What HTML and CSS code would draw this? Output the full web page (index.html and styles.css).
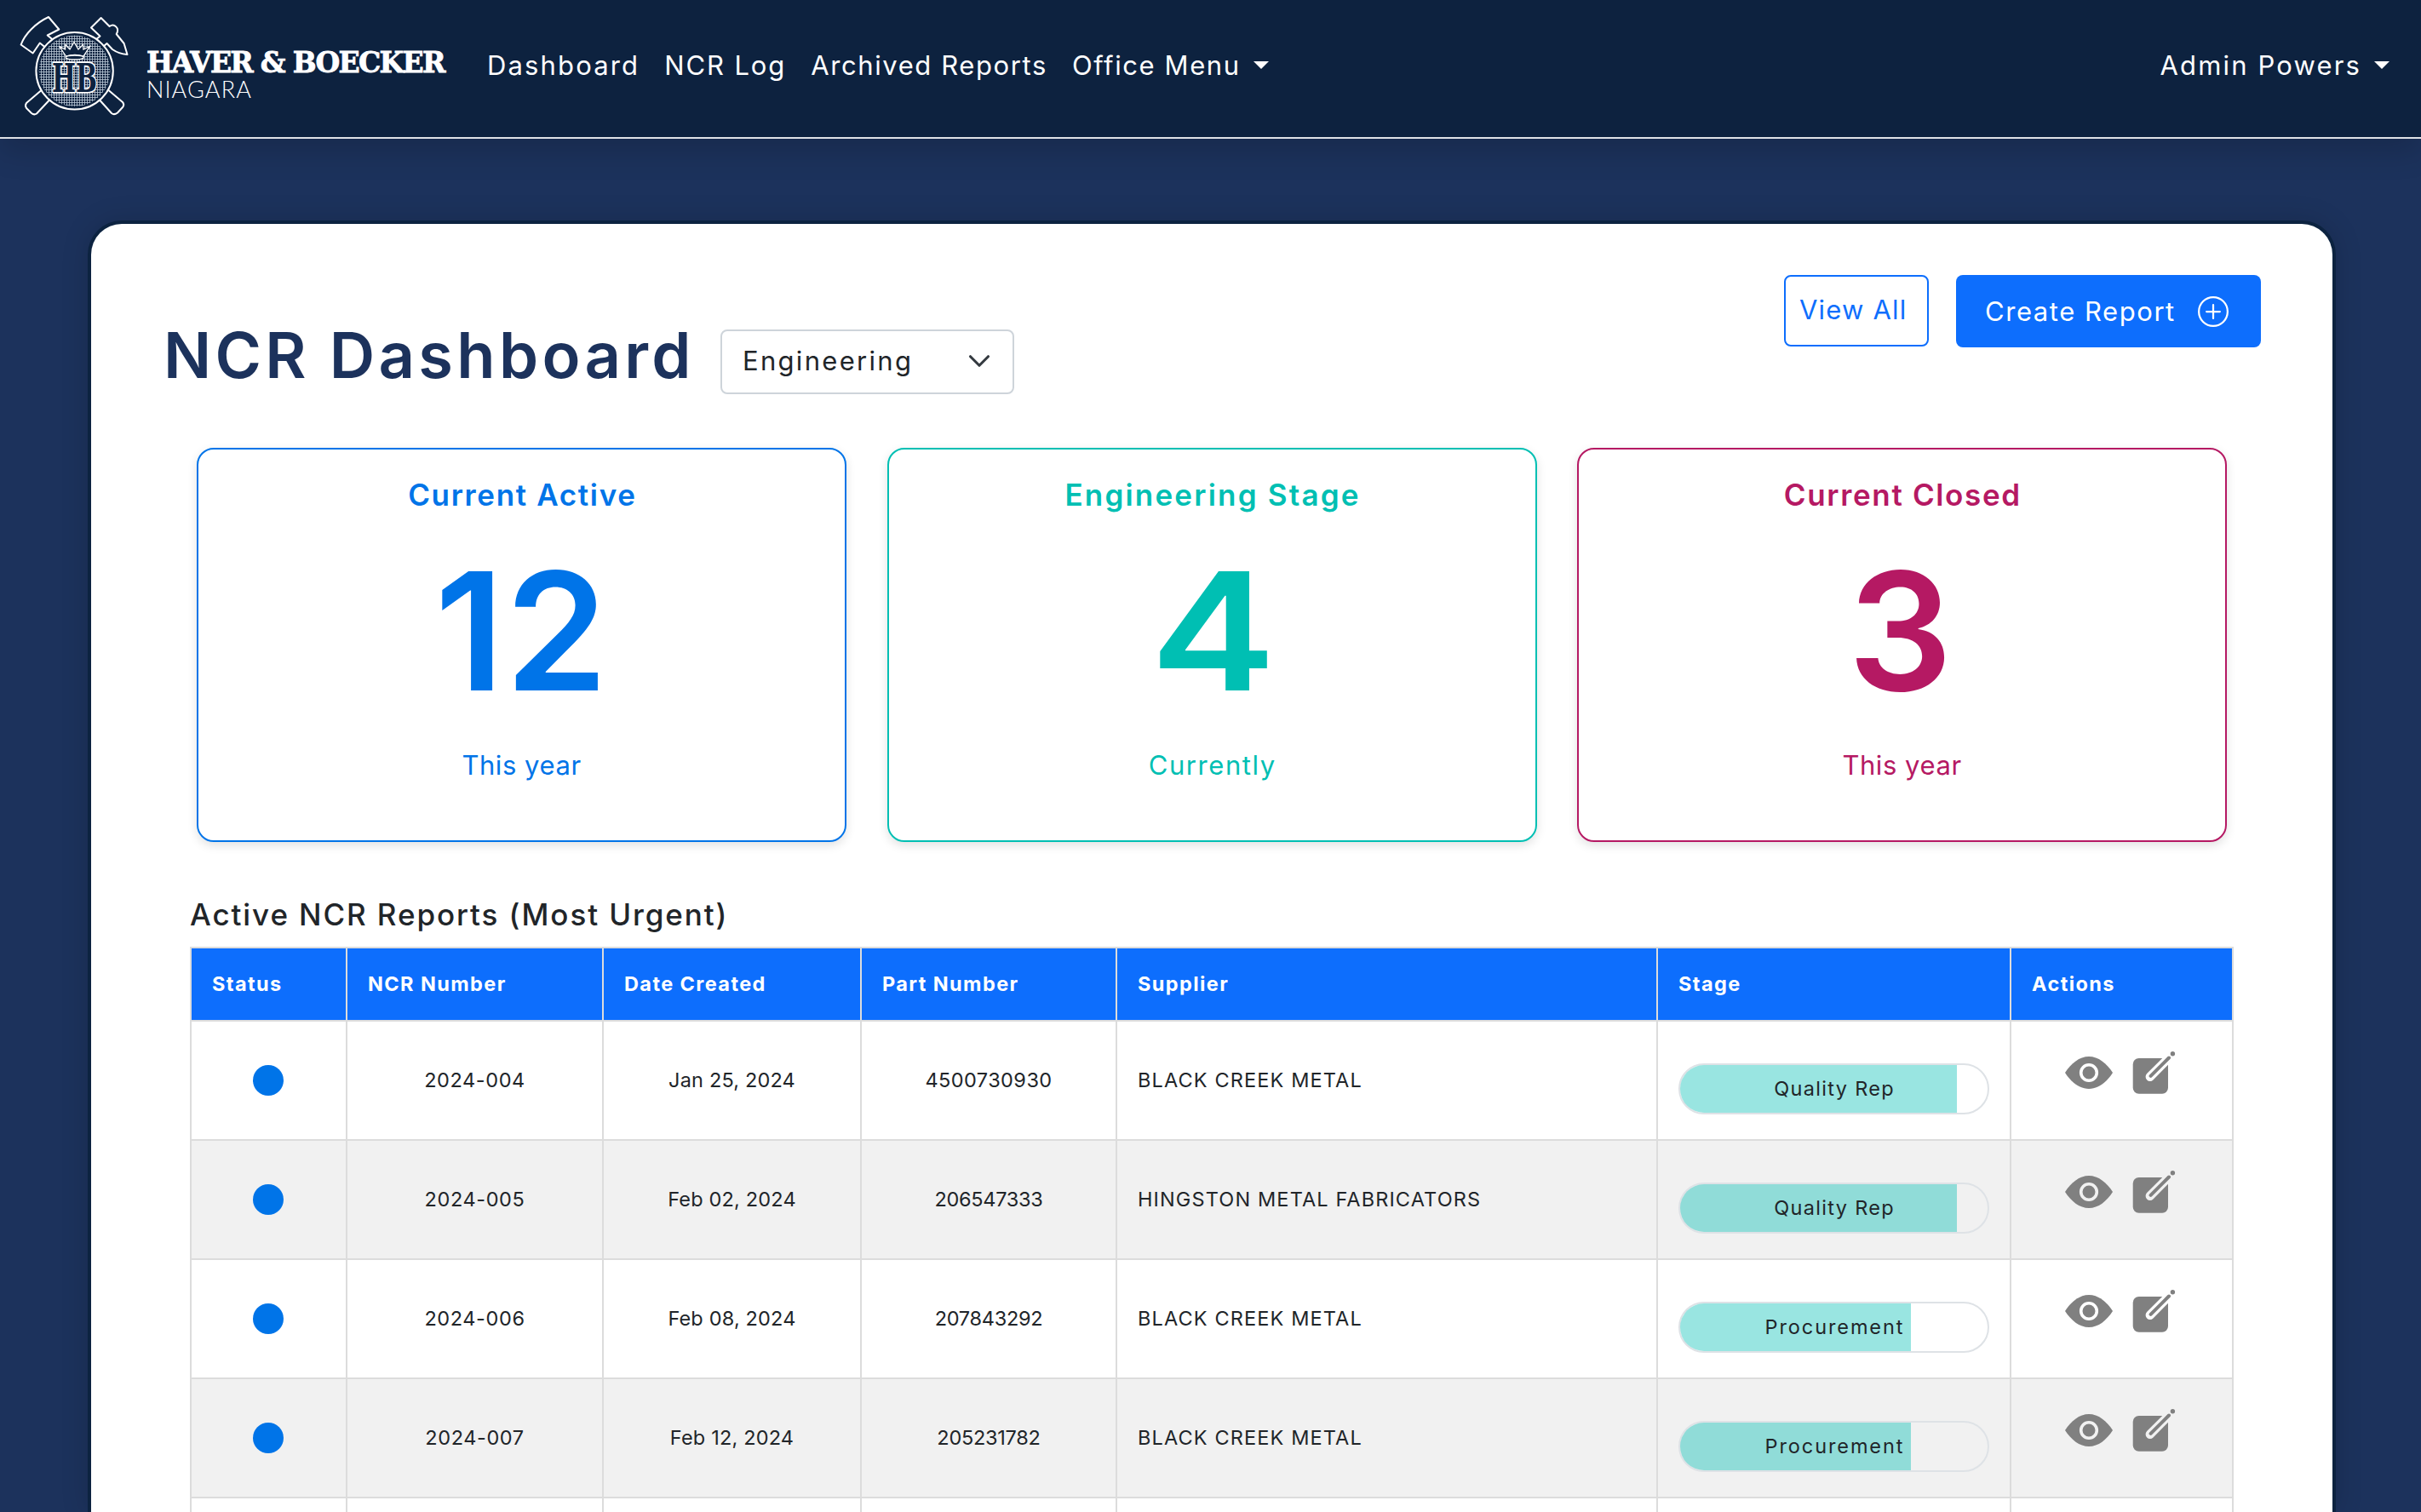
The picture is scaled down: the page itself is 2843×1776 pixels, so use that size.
FILE: index.html
```html
<!DOCTYPE html>
<html lang="en">
<head>
<meta charset="utf-8">
<title>NCR Dashboard</title>
<link rel="stylesheet" href="styles.css">
</head>
<body>
<svg class="defs" width="0" height="0" aria-hidden="true">
  <symbol id="eye" viewBox="0 0 56 38">
    <path d="M0 19C7 8 17 0 28 0s21 8 28 19c-7 11-17 19-28 19S7 30 0 19Z" fill="#808080"/>
    <circle cx="28" cy="19" r="9.3" fill="none" stroke="var(--row-bg)" stroke-width="3.6"/>
  </symbol>
  <symbol id="edit" viewBox="0 0 52 52">
    <rect x="1.7" y="9" width="41.3" height="41.7" rx="7" fill="#808080"/>
    <path d="M21.8 30.7 50 2.5" stroke="var(--row-bg)" stroke-width="10.4" stroke-linecap="round"/>
    <path d="M22.6 29.9 44 8.5" stroke="#808080" stroke-width="4" stroke-linecap="round"/>
    <circle cx="48.4" cy="3.8" r="2.7" fill="#808080"/>
  </symbol>
</svg>

<header class="navbar">
  <a class="brand">
    <svg class="brand-mark" viewBox="20 14 134 124">
      <defs>
        <pattern id="mesh" width="3" height="3" patternUnits="userSpaceOnUse">
          <path d="M0 .5H3M.5 0V3" stroke="#b9c6d4" stroke-width=".8"/>
        </pattern>
      </defs>
      <g fill="none" stroke="#fff" stroke-width="2" stroke-linejoin="round">
        <path d="M62.5 47 55.7 41.5 69.3 34.5 57 20C42 27 29 40 24.6 52.5L38.6 62.5 46.8 50.5 53 55.5"/>
        <path d="M112.5 46.5 117.5 42.5 107 32.5 118.6 21 128.6 31C134 27 141 33 136.7 40L145.6 51 149.5 64C143 63.5 137 61.5 132 58L125.5 51 121.5 54.5"/>
        <path d="M48 106.5 31 121Q29 124 31 127L37 133Q40 135.5 43 133.5L58 117.5"/>
        <path d="M127.5 106 144 120Q146.5 123 144 126L138 132.5Q134 135.5 131 133L117 117.5"/>
        <circle cx="87.6" cy="83.3" r="45.2" fill="#0d223f"/>
      </g>
      <circle cx="87.6" cy="83.3" r="41.8" fill="url(#mesh)"/>
      <path d="M77.5 66 69.7 54.5 76.5 58 76.8 52.5 82 58 87 49.5 92 58 97.5 52.5 98 58 105.5 54.5 98 66Q88 63 77.5 66Z" fill="#0d223f" stroke="#fff" stroke-width="1.3"/>
      <ellipse cx="87.7" cy="67.5" rx="10.5" ry="2.5" fill="#0d223f" stroke="#fff" stroke-width="1.3"/>
      <text class="monogram" x="61" y="108" textLength="53" lengthAdjust="spacingAndGlyphs">HB</text>
    </svg>
    <span class="brand-text">
      <span class="brand-name">HAVER &amp; BOECKER</span>
      <span class="brand-region">NIAGARA</span>
    </span>
  </a>
  <nav class="nav-links">
    <a class="nav-link wide">Dashboard</a>
    <a class="nav-link log">NCR Log</a>
    <a class="nav-link">Archived Reports</a>
    <a class="nav-link">Office Menu<span class="caret"></span></a>
  </nav>
  <nav class="nav-links nav-right">
    <a class="nav-link wide">Admin Powers<span class="caret"></span></a>
  </nav>
</header>

<main class="panel">
  <div class="toolbar">
    <h1 class="page-title">NCR Dashboard</h1>
    <div class="select">
      <span>Engineering</span>
      <svg width="28" height="28" viewBox="0 0 16 16"><path d="m2 5 6 6 6-6" fill="none" stroke="#343a40" stroke-width="1.8" stroke-linecap="round" stroke-linejoin="round"/></svg>
    </div>
    <div class="buttons">
      <a class="btn btn-outline">View All</a>
      <a class="btn btn-primary"><span>Create Report</span>
        <svg width="36" height="36" viewBox="0 0 16 16" fill="#fff"><path d="M8 15A7 7 0 1 1 8 1a7 7 0 0 1 0 14m0 1A8 8 0 1 0 8 0a8 8 0 0 0 0 16"/><path d="M8 4a.5.5 0 0 1 .5.5v3h3a.5.5 0 0 1 0 1h-3v3a.5.5 0 0 1-1 0v-3h-3a.5.5 0 0 1 0-1h3v-3A.5.5 0 0 1 8 4"/></svg>
      </a>
    </div>
  </div>

  <section class="stats">
    <article class="stat stat-blue"><h2 class="stat-title">Current Active</h2><p class="stat-value">12</p><p class="stat-note tight">This year</p></article>
    <article class="stat stat-teal"><h2 class="stat-title stage">Engineering Stage</h2><p class="stat-value four">4</p><p class="stat-note">Currently</p></article>
    <article class="stat stat-pink"><h2 class="stat-title">Current Closed</h2><p class="stat-value three">3</p><p class="stat-note tight">This year</p></article>
  </section>

  <h2 class="section-title">Active NCR Reports (Most Urgent)</h2>
  <table class="reports">
    <colgroup><col class="c-status"><col class="c-ncr"><col class="c-date"><col class="c-part"><col class="c-supplier"><col class="c-stage"><col class="c-actions"></colgroup>
    <thead>
      <tr><th>Status</th><th>NCR Number</th><th>Date Created</th><th>Part Number</th><th>Supplier</th><th>Stage</th><th>Actions</th></tr>
    </thead>
    <tbody>
      <tr>
        <td><span class="dot"></span></td><td class="ncr">2024-004</td><td class="date">Jan 25, 2024</td><td class="part">4500730930</td><td class="supplier">BLACK CREEK METAL</td>
        <td class="stage-cell"><div class="progress"><div class="fill" style="width:90%"></div><span class="label">Quality Rep</span></div></td>
        <td class="actions-cell"><div class="actions"><svg width="56" height="38"><use href="#eye"/></svg><svg width="52" height="52"><use href="#edit"/></svg></div></td>
      </tr>
      <tr>
        <td><span class="dot"></span></td><td class="ncr">2024-005</td><td class="date">Feb 02, 2024</td><td class="part short">206547333</td><td class="supplier">HINGSTON METAL FABRICATORS</td>
        <td class="stage-cell"><div class="progress"><div class="fill" style="width:90%"></div><span class="label">Quality Rep</span></div></td>
        <td class="actions-cell"><div class="actions"><svg width="56" height="38"><use href="#eye"/></svg><svg width="52" height="52"><use href="#edit"/></svg></div></td>
      </tr>
      <tr>
        <td><span class="dot"></span></td><td class="ncr">2024-006</td><td class="date">Feb 08, 2024</td><td class="part short">207843292</td><td class="supplier">BLACK CREEK METAL</td>
        <td class="stage-cell"><div class="progress"><div class="fill" style="width:75%"></div><span class="label loose">Procurement</span></div></td>
        <td class="actions-cell"><div class="actions"><svg width="56" height="38"><use href="#eye"/></svg><svg width="52" height="52"><use href="#edit"/></svg></div></td>
      </tr>
      <tr>
        <td><span class="dot"></span></td><td class="ncr">2024-007</td><td class="date">Feb 12, 2024</td><td class="part short">205231782</td><td class="supplier">BLACK CREEK METAL</td>
        <td class="stage-cell"><div class="progress"><div class="fill" style="width:75%"></div><span class="label loose">Procurement</span></div></td>
        <td class="actions-cell"><div class="actions"><svg width="56" height="38"><use href="#eye"/></svg><svg width="52" height="52"><use href="#edit"/></svg></div></td>
      </tr>
      <tr class="partial"><td></td><td></td><td></td><td></td><td></td><td></td><td></td></tr>
    </tbody>
  </table>
</main>
</body>
</html>
```
FILE: styles.css
```css
* { box-sizing: border-box; }
html, body { height: 100%; overflow: hidden; }
body {
  display: flex;
  flex-direction: column;
  margin: 0;
  background: #1c325c;
  color: #212529;
  font: 400 31px/48px Inter, "Liberation Sans", sans-serif;
}
h1, h2, p { margin: 0; }
svg { flex: none; display: block; }
.defs { position: absolute; }

/* Navigation bar */
.navbar {
  display: flex;
  flex: none;
  align-items: flex-start;
  height: 163px;
  padding-right: 37px;
  background: #0d223f;
  border-bottom: 2px solid #dee2e6;
  box-shadow: 0 16px 32px rgba(0, 0, 0, .15);
}
.brand { display: flex; width: 572px; flex: none; padding-left: 20px; }
.brand-mark { width: 134px; height: 124px; margin-top: 14px; }
.monogram { font: 700 46px "DejaVu Serif", serif; fill: #0d223f; stroke: #fff; stroke-width: 3.6px; stroke-linejoin: round; paint-order: stroke; }
.brand-text { display: flex; flex-direction: column; padding: 56px 0 0 18px; color: #fff; white-space: nowrap; }
.brand-name { font: 700 33px/36px "DejaVu Serif", serif; letter-spacing: -1.7px; -webkit-text-stroke: .8px #fff; }
.brand-region { font: 300 27px/26px Lato, sans-serif; letter-spacing: 1.1px; }
.nav-links { display: flex; gap: 29px; padding-top: 53px; }
.nav-right { margin-left: auto; }
.nav-link { display: flex; align-items: center; color: #fff; letter-spacing: 1.6px; white-space: nowrap; }
.nav-link.wide { letter-spacing: 2.15px; }
.nav-link.log { letter-spacing: 1.87px; }
.caret {
  margin: -2px 0 0 15px;
  border: 9px solid transparent;
  border-top-color: #fff;
  border-bottom: 0;
}

/* White page panel */
.panel {
  flex: 1;
  min-height: 0;
  margin: 96px 100px 0 103px;
  overflow: hidden;
  background: #fff;
  border: 4px solid #0c2340;
  border-bottom: 0;
  border-radius: 40px 40px 0 0;
  box-shadow: 0 0 32px rgba(0, 0, 0, .15);
}
.toolbar { display: flex; align-items: flex-start; padding: 60px 84px 0 85px; }
.page-title { width: 654px; flex: none; padding-top: 48px; color: #1c325c; font-weight: 600; font-size: 74px; line-height: 92px; letter-spacing: 4.3px; white-space: nowrap; }
.select {
  display: flex;
  align-items: center;
  justify-content: space-between;
  width: 345px;
  height: 76px;
  margin-top: 64px;
  padding: 0 25px 2px 24px;
  border: 2px solid #ced4da;
  border-radius: 8px;
  letter-spacing: 2.3px;
}
.buttons { display: flex; gap: 32px; margin-left: auto; }
.btn { display: flex; align-items: center; border-radius: 8px; white-space: nowrap; }
.btn-outline { width: 170px; height: 84px; padding: 0 0 2px 16px; border: 2px solid #0d6efd; color: #0d6efd; letter-spacing: 1.2px; }
.btn-primary { width: 358px; height: 85px; padding-left: 34px; gap: 26px; background: #0d6efd; color: #fff; letter-spacing: 1.55px; }

/* Summary cards */
.stats { display: grid; grid-template-columns: repeat(3, 1fr); gap: 47.5px; padding: 63px 124px 0; }
.stat {
  height: 463px;
  padding-top: 31px;
  border: 2px solid;
  border-radius: 20px;
  box-shadow: 0 4px 12px rgba(0, 0, 0, .12);
  text-align: center;
}
.stat-blue { color: #0074e8; }
.stat-teal { color: #00bfb3; }
.stat-pink { color: #b51963; }
.stat-title { font-weight: 600; font-size: 35px; line-height: 44px; letter-spacing: 1.65px; text-indent: 1.65px; }
.stat-title.stage { letter-spacing: 2.2px; text-indent: 2.2px; }
.stat-value { margin: 38px 0; font-weight: 600; font-size: 193px; line-height: 200px; letter-spacing: 1px; }
.stat-value.four { padding-left: 3px; transform: scaleX(1.15); }
.stat-value.three { padding-right: 3px; }
.stat-note { line-height: 40px; letter-spacing: 1.57px; text-indent: 1.5px; }
.stat-note.tight { letter-spacing: .56px; text-indent: 0; }

/* Reports table */
.section-title { margin: 63px 0 16px 116px; font-weight: 500; font-size: 35px; line-height: 44px; letter-spacing: 1.9px; }
.reports { width: 2400px; margin-left: 116px; table-layout: fixed; border-collapse: separate; border-spacing: 0; font-size: 23.5px; line-height: 36px; }
.c-status { width: 185px; }
.c-ncr { width: 301px; }
.c-date { width: 303px; }
.c-part { width: 300px; }
.c-supplier { width: 635px; }
.c-stage { width: 415px; }
.c-actions { width: 261px; }
th, td { padding: 0 24px; border: 0 solid #dcdcdc; border-width: 0 2px 2px 0; text-align: center; white-space: nowrap; }
th { height: 88px; border-top-width: 2px; background: #0d6efd; background-clip: padding-box; color: #fff; font-weight: 700; text-align: left; letter-spacing: 1.4px; }
td { height: 140px; }
.partial td { height: 18px; border-bottom: 0; }
th:first-child, td:first-child { border-left-width: 2px; }
tbody tr { --row-bg: #fff; background: #fff; }
tbody tr:nth-child(even) { --row-bg: #f1f1f1; background: #f1f1f1; }
.dot { display: block; width: 36px; height: 36px; margin-left: 48px; border-radius: 50%; background: #0074e8; }
.ncr { letter-spacing: .6px; }
.date { letter-spacing: .17px; }
.part { letter-spacing: .44px; }
.part.short { letter-spacing: -.27px; }
.supplier { text-align: left; letter-spacing: 1.13px; }
.stage-cell { padding-top: 49px; vertical-align: top; }
.progress { display: grid; height: 60px; overflow: hidden; border: 2px solid #dee2e6; border-radius: 30px; }
.fill, .label { grid-area: 1 / 1; }
.fill { background: rgba(0, 191, 179, .4); }
.label { align-self: center; letter-spacing: 1.31px; text-indent: 1.3px; }
.label.loose { letter-spacing: 1.9px; text-indent: 1.9px; }
.actions-cell { padding: 34px 0 0 63px; vertical-align: top; }
.actions { display: flex; align-items: center; gap: 22px; }
```
